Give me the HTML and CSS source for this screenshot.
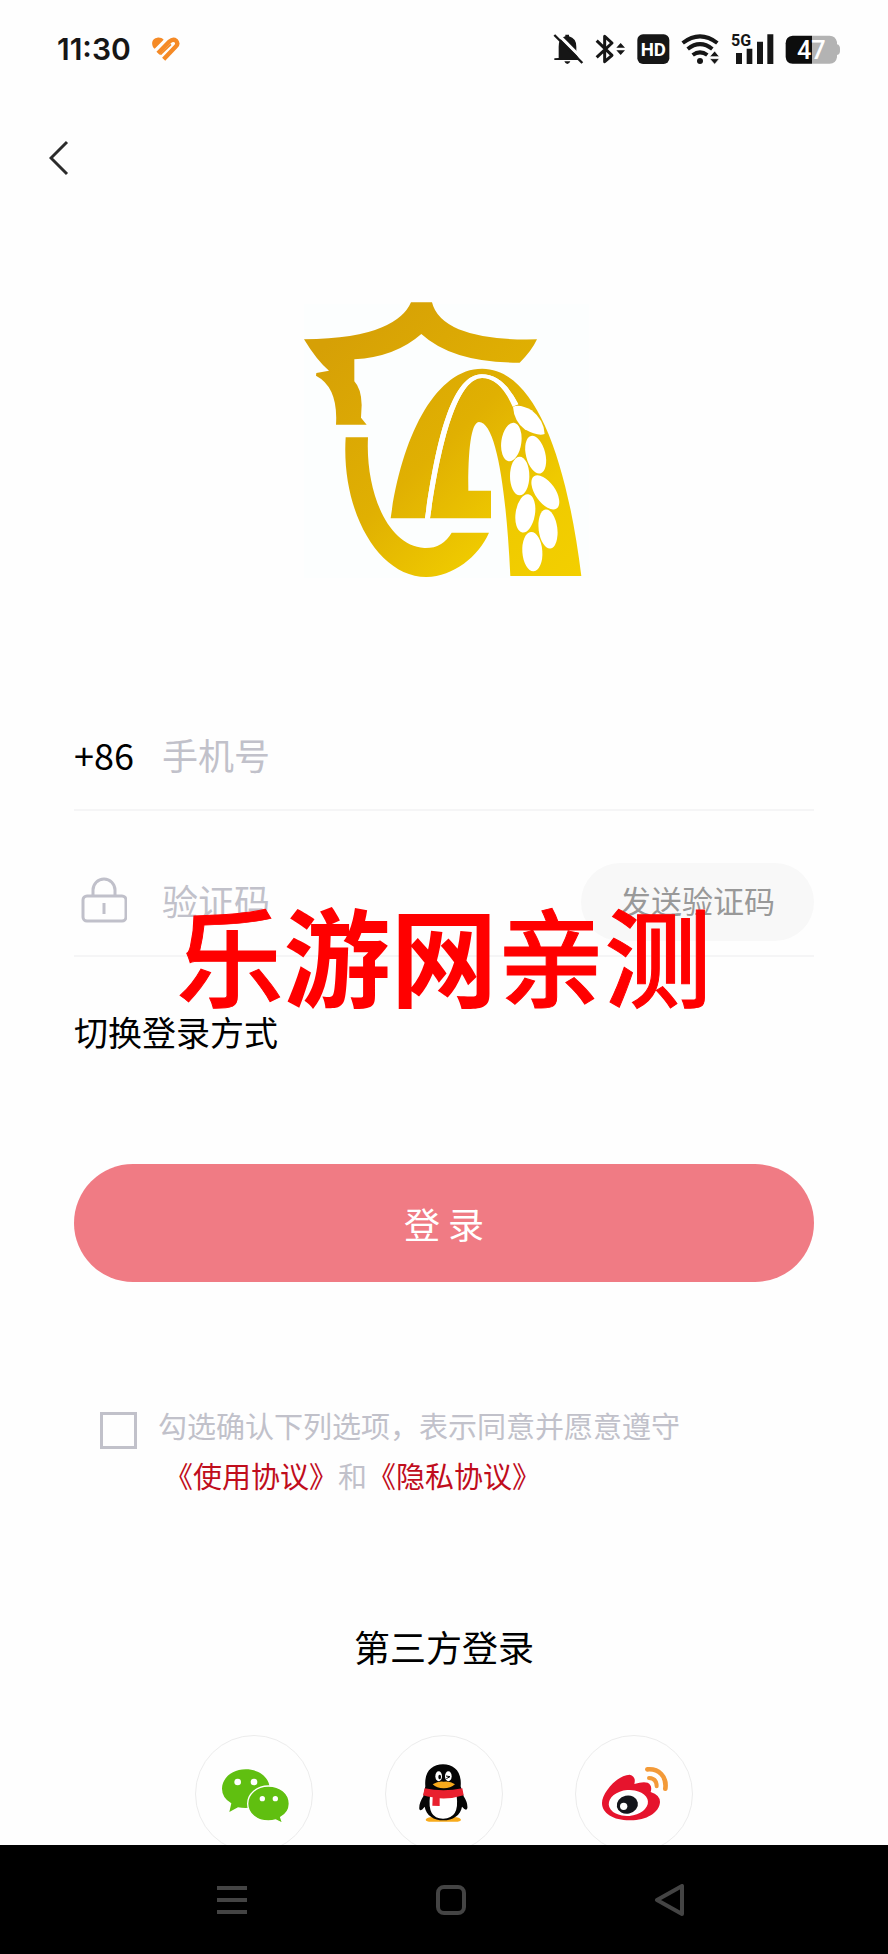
FILE: index.html
```html
<!DOCTYPE html>
<html lang="zh-CN">
<head>
    <meta charset="UTF-8">
    <meta name="viewport" content="width=device-width, initial-scale=1.0">
    <title>登录</title>
    <link rel="stylesheet" href="styles.css">
</head>
<body>
    <header class="status-bar">
        <span class="time">11:30</span>
        <svg class="heart" width="30" height="26" viewBox="452 108 90 78" fill="#f58a26">
            <path d="M461 145C452 134 453 115 471 113C479 112 486 115 490 119L463 146Z"/>
            <path fill="none" stroke="#f58a26" stroke-width="13" d="M473 160L507 125Q518 115 527 122Q535 131 527 139L490 178"/>
            <path fill="none" stroke="#f58a26" stroke-width="5" d="M480 164L512 133"/>
        </svg>
        <div class="status-icons">
            <svg width="31" height="34" viewBox="66 64 93 102">
                <path fill="#161616" d="M83 142V108Q83 82 103 77V72H114V77Q136 83 136 108V130L144 144V148H70V143Z"/>
                <path fill="#161616" d="M100 152H118Q115 160 109 160T100 152Z"/>
                <path stroke="#fff" stroke-width="9" d="M78 68L162 152"/>
                <path stroke="#161616" stroke-width="7" d="M70 73L154 157"/>
            </svg>
            <svg width="31" height="34" viewBox="195 64 93 102">
                <path fill="none" stroke="#161616" stroke-width="9" stroke-linejoin="round" d="M200 90L246 134L224 153V77L246 97L200 140"/>
                <path fill="#161616" d="M259 111L272 97L285 111ZM259 119L272 133L285 119Z"/>
            </svg>
            <svg width="33" height="34" viewBox="320 64 99 102">
                <rect x="321" y="71" width="96" height="89" rx="17" fill="#161616"/>
                <text class="hd-text" x="369" y="136" text-anchor="middle">HD</text>
            </svg>
            <svg width="39" height="34" viewBox="453 64 117 102">
                <g fill="none" stroke="#161616" stroke-width="12">
                    <path d="M458 97Q510 57 562 97"/>
                    <path d="M473 115Q510 86 547 115"/>
                    <path d="M488 133Q510 117 532 133"/>
                </g>
                <circle cx="510" cy="151" r="9" fill="#161616"/>
                <path fill="#161616" stroke="#fff" stroke-width="2" d="M539 138L554 121L568 138ZM539 144L554 161L568 144Z"/>
            </svg>
            <svg width="43" height="34" viewBox="600 64 129 102">
                <path fill="#161616" d="M615 127H633V160H615ZM647 114H664V160H647ZM678 93H696V160H678ZM709 71H727V160H709Z"/>
                <text class="net-text" x="600" y="107">5G</text>
            </svg>
            <svg width="56" height="34" viewBox="766 64 168 102">
                <path fill="#b3b3b3" d="M847 75H900Q917 75 922 94V101Q932 103 931 117Q932 131 922 133V140Q919 159 900 159H847Z"/>
                <path fill="#0d0d0d" d="M847 75H789Q768 77 768 98V138Q769 158 789 159H847Z"/>
                <text class="battery-text" x="845" y="145" text-anchor="middle">47</text>
            </svg>
        </div>
    </header>

    <main>
        <div class="top-bar">
            <button class="back" type="button" aria-label="返回">
                <svg width="20" height="36" viewBox="0 0 20 36" fill="none" stroke="#2b2b2b" stroke-width="3"><path d="M18 2L2 18L18 34"/></svg>
            </button>
        </div>

        <svg class="logo" width="290" height="280" viewBox="27 30 870 840">
            <defs>
                <linearGradient id="gold" gradientUnits="userSpaceOnUse" x1="150" y1="120" x2="860" y2="860">
                    <stop offset="0" stop-color="#d6a006"/>
                    <stop offset="0.45" stop-color="#e0b002"/>
                    <stop offset="0.75" stop-color="#efca00"/>
                    <stop offset="1" stop-color="#f3cf00"/>
                </linearGradient>
            </defs>
            <rect x="42" y="42" width="855" height="822" fill="#fcfefe"/>
            <g fill="url(#gold)">
                <path d="M363 37H426Q438 88 506 118Q590 152 741 148Q725 183 689 218Q489 219 394 132Q316 201 193 208V274Q214 296 215 345L213 383L230 404H138Q145 292 78 257L79 249L117 242Q82 214 42 148Q200 146 276 112Q343 84 363 37Z"/>
                <path d="M167 442H234C226 600 290 767 403 774Q457 776 485 728H597C565 801 490 858 410 861C265 862 153 664 167 442Z"/>
                <path d="M302 685C335 438 438 235 577 236C739 238 831 513 874 858H661C650 625 622 397 567 396C547 397 534 456 535 602H603V685H420C455 435 507 264 576 264Q630 264 668 345L685 343Q640 253 575 253C487 255 439 440 405 685Z"/>
            </g>
            <g fill="#fff">
                <path d="M405 685C439 440 487 253 575 253Q640 253 685 343L668 350Q630 264 576 264C507 264 455 435 420 685Z"/>
                <path d="M669 350Q690 341 725 361Q762 390 764 432Q744 440 704 418Q672 393 669 350Z"/>
                <ellipse cx="664" cy="456" rx="30" ry="58" transform="rotate(8 664 456)"/>
                <ellipse cx="737" cy="494" rx="29" ry="58" transform="rotate(-14 737 494)"/>
                <ellipse cx="689" cy="558" rx="29" ry="58"/>
                <ellipse cx="766" cy="607" rx="30" ry="59" transform="rotate(-35 766 607)"/>
                <ellipse cx="706" cy="670" rx="29" ry="58" transform="rotate(9 706 670)"/>
                <ellipse cx="774" cy="717" rx="28" ry="59" transform="rotate(-7 774 717)"/>
                <ellipse cx="727" cy="785" rx="30" ry="59" transform="rotate(-4 727 785)"/>
            </g>
        </svg>

        <form class="login-form">
            <div class="field">
                <label for="phone">+86</label>
                <input type="tel" id="phone" placeholder="手机号">
            </div>
            <div class="field">
                <label for="code" aria-label="验证码">
                    <svg class="lock" width="46" height="46" viewBox="0 0 46 46" fill="none" stroke="#c0c0ca" stroke-width="3">
                        <rect x="2" y="19" width="43" height="25" rx="4"/>
                        <path d="M12 19V13A11 11 0 0 1 34 13V19M23 26V37"/>
                    </svg>
                </label>
                <input type="text" id="code" placeholder="验证码">
                <button class="send" type="button">发送验证码</button>
            </div>
            <a class="switch" href="#">切换登录方式</a>
            <button class="submit" type="submit">登 录</button>
            <div class="agreement">
                <input type="checkbox" id="agree">
                <div>
                    <label for="agree">勾选确认下列选项，表示同意并愿意遵守</label>
                    <p><a href="#">《使用协议》</a>和<a href="#">《隐私协议》</a></p>
                </div>
            </div>
            <div class="watermark">乐<b>游网</b>亲测</div>
        </form>

        <h2>第三方登录</h2>
        <div class="social">
            <a href="#" aria-label="微信">
                <svg width="70" height="70" viewBox="117 478 210 210">
                    <path fill="#60bf10" d="M197 509C240 509 269 535 269 567S240 625 197 625Q184 625 174 623L148 637L154 611Q126 594 126 567C126 535 157 509 197 509Z"/>
                    <path fill="#60bf10" stroke="#fff" stroke-width="4" d="M265 559C301 559 328 582 328 612Q328 638 302 653L308 671L287 661Q277 664 265 664C230 664 203 641 203 612S230 559 265 559Z"/>
                    <g fill="#fff"><circle cx="173" cy="547" r="10"/><circle cx="222" cy="547" r="10"/><circle cx="247" cy="597" r="8"/><circle cx="286" cy="597" r="8"/></g>
                </svg>
            </a>
            <a href="#" aria-label="QQ">
                <svg width="70" height="70" viewBox="687 478 210 210">
                    <path fill="#f8ab1c" d="M737 660Q742 650 765 652H815Q838 650 843 660Q842 666 826 666H754Q738 666 737 660Z"/>
                    <path fill="#050505" d="M736 560C732 516 756 494 789 494S846 516 842 560L851 590Q864 610 862 626Q859 636 846 621C842 647 818 662 790 662S738 647 734 621Q721 638 718 628Q716 612 730 590Z"/>
                    <path fill="#fff" d="M750 589Q790 598 830 589Q839 656 790 657T750 589Z"/>
                    <ellipse cx="776" cy="530" rx="10" ry="15" fill="#fff"/>
                    <ellipse cx="805" cy="530" rx="10" ry="15" fill="#fff"/>
                    <ellipse cx="779" cy="532" rx="4" ry="7" fill="#050505"/>
                    <path fill="none" stroke="#050505" stroke-width="3" d="M798 529L810 531L799 537"/>
                    <path fill="#f8ab1c" d="M758 554Q775 543 791 546Q810 543 825 554Q812 566 791 566T758 554Z"/>
                    <path fill="#e9202e" d="M734 566Q790 578 847 566L851 587Q817 598 779 596V619L757 618L758 593Q742 592 729 587Z"/>
                </svg>
            </a>
            <a href="#" aria-label="微博">
                <svg width="70" height="70" viewBox="357 178 210 210">
                    <path fill="#e6142d" d="M366 310C366 280 412 225 449 225Q469 230 463 253Q488 245 503 249Q518 257 512 277Q540 286 540 307C538 340 497 363 449 362C400 362 366 341 366 310Z"/>
                    <ellipse cx="445" cy="310" rx="59" ry="39" fill="#fff" transform="rotate(-5 445 310)"/>
                    <ellipse cx="442" cy="315" rx="32" ry="27" fill="#14151b" transform="rotate(-12 442 315)"/>
                    <circle cx="431" cy="320" r="11" fill="#fff"/>
                    <g fill="none" stroke="#f39a38" stroke-linecap="round">
                        <path stroke-width="14" d="M502 209C536 206 561 230 556 267"/>
                        <path stroke-width="12" d="M507 235Q530 236 530 260"/>
                    </g>
                </svg>
            </a>
        </div>
    </main>

    <nav class="system-nav">
        <button type="button" aria-label="菜单">
            <svg width="32" height="32" viewBox="0 0 32 32" stroke="#444" stroke-width="4"><path d="M1 4H31M1 16H31M1 28H31"/></svg>
        </button>
        <button type="button" aria-label="主页">
            <svg width="32" height="32" viewBox="0 0 32 32" fill="none" stroke="#444" stroke-width="4"><rect x="3" y="3" width="26" height="26" rx="6"/></svg>
        </button>
        <button type="button" aria-label="后退">
            <svg width="32" height="32" viewBox="0 0 32 32" fill="none" stroke="#444" stroke-width="4" stroke-linejoin="round"><path d="M28 2V30L3 16Z"/></svg>
        </button>
    </nav>
</body>
</html>
```

FILE: styles.css
```css
* { box-sizing: border-box; }
body {
    margin: 0;
    min-height: 100vh;
    background-color: #fefefe;
    color: #000;
    font-family: 'Noto Sans CJK SC', sans-serif;
    font-size: 36px;
    line-height: 50px;
}
a { color: inherit; text-decoration: none; }
p { margin: 0; }
svg { display: block; }
button, input { font: inherit; color: inherit; }
button { padding: 0; border: none; background: none; cursor: pointer; }

/* phone status bar */
.status-bar {
    display: flex;
    align-items: center;
    height: 98px;
    padding: 0 47px 0 57px;
}
.time {
    font-family: Inter, sans-serif;
    font-size: 30px;
    font-weight: 600;
    color: #161616;
}
.heart { margin-left: 20px; }
.status-icons {
    display: flex;
    gap: 11px;
    margin-left: auto;
}
.status-icons text { font-family: Roboto, sans-serif; font-weight: 700; }
.hd-text { font-size: 56px; fill: #fff; }
.net-text { font-size: 48px; fill: #161616; }
.status-icons .battery-text { font-size: 76px; font-weight: 500; fill: #fff; }

.top-bar {
    display: flex;
    align-items: center;
    height: 120px;
    padding-left: 49px;
}
.logo { margin: 82px auto 85px; }

/* form */
.login-form {
    position: relative;
    padding: 0 74px;
}
.field {
    display: flex;
    align-items: center;
    height: 146px;
    padding: 52px 0 15px;
    border-bottom: 2px solid #f5f5f6;
}
.field label {
    flex: 0 0 88px;
    padding-bottom: 4px;
}
.field input {
    flex: 1;
    min-width: 0;
    padding: 0 0 4px;
    border: none;
    outline: none;
    background: none;
}
.field input::placeholder { color: #c1c1ca; opacity: 1; }
.lock { margin-left: 7px; }
.send {
    width: 233px;
    height: 78px;
    padding-bottom: 4px;
    border-radius: 39px;
    background-color: #f8f8f8;
    color: #999;
    font-size: 31px;
}
.switch {
    display: block;
    width: max-content;
    margin-top: 50px;
    font-size: 34px;
}
.submit {
    display: block;
    width: 100%;
    height: 118px;
    margin-top: 107px;
    border-radius: 59px;
    background-color: #f07b84;
    color: #fff;
}
.agreement {
    display: flex;
    gap: 21px;
    margin: 118px 0 0 26px;
    font-size: 29px;
    color: #c1c1ca;
}
.agreement input {
    appearance: none;
    width: 37px;
    height: 37px;
    margin: 12px 0 0;
    border: 3px solid #c1c1ca;
}
.agreement input:checked { background-color: #f07b84; }
.agreement p { padding-left: 6px; }
.agreement a { color: #c00d1c; }
.watermark {
    position: absolute;
    top: 234px;
    left: 0;
    right: 0;
    color: #f00;
    font-size: 107px;
    font-weight: 500;
    line-height: 108px;
    text-align: center;
    pointer-events: none;
    -webkit-text-stroke: 1px #f00;
}
.watermark b { -webkit-text-stroke: 0; }

h2 {
    margin: 121px 0 64px;
    font-size: 36px;
    font-weight: 400;
    text-align: center;
}
.social {
    display: flex;
    justify-content: center;
    gap: 72px;
    padding-bottom: 100px;
}
.social a {
    display: flex;
    align-items: center;
    justify-content: center;
    width: 118px;
    height: 118px;
    border: 1px solid #ececec;
    border-radius: 50%;
}

/* system buttons stay over the page */
.system-nav {
    position: fixed;
    bottom: 0;
    left: 0;
    right: 0;
    display: flex;
    align-items: center;
    justify-content: center;
    gap: 187px;
    height: 109px;
    padding-left: 14px;
    background-color: #000;
}
```
